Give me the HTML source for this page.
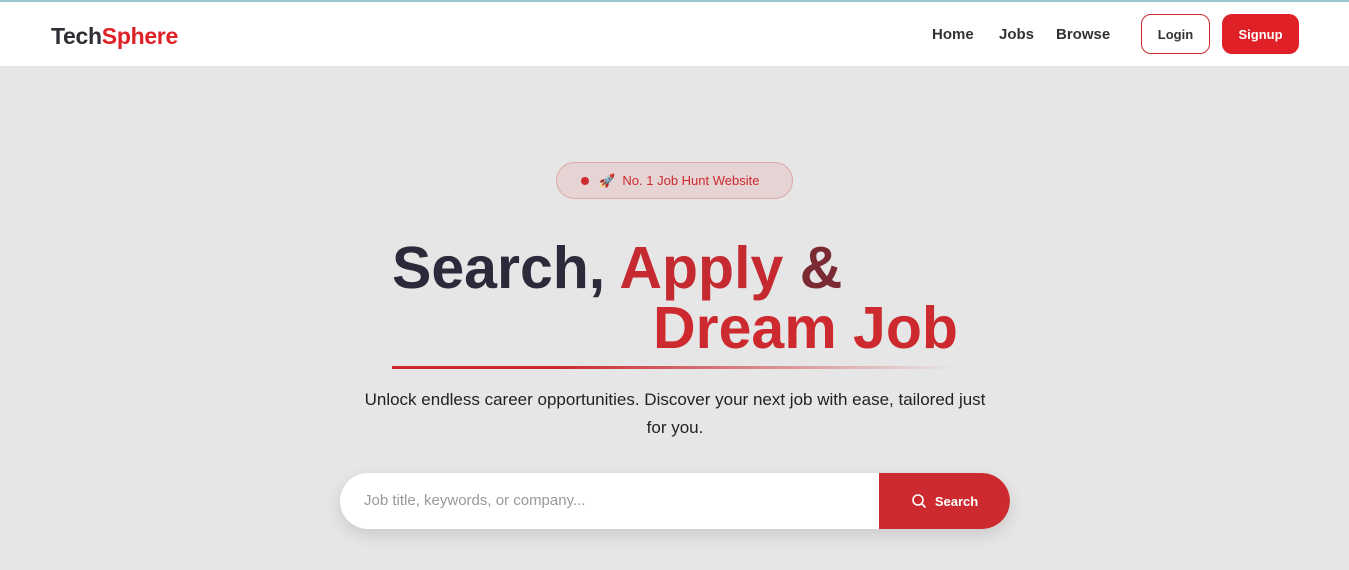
<!DOCTYPE html>
<html><head><style>
*{margin:0;padding:0;box-sizing:border-box}
body{width:1349px;height:570px;overflow:hidden;background:#e6e6e6;font-family:"Liberation Sans",sans-serif;position:relative}
.top{position:absolute;left:0;top:0;width:100%;height:2px;background:#9cc7cf}
nav{position:absolute;top:2px;left:0;width:100%;height:64px;background:#fff}
.logo{position:absolute;left:51px;top:21px;font-size:23px;font-weight:bold;color:#2e2e35;letter-spacing:-0.3px}
.logo span{color:#df2027}
.links{position:absolute;top:24px;font-size:15px;color:#333;font-weight:bold}
.btn{position:absolute;top:12px;height:40px;border-radius:10px;font-size:13px;font-weight:bold;display:flex;align-items:center;justify-content:center}
.badge{position:absolute;left:556px;top:162px;width:237px;height:37px;border-radius:19px;background:#e6d3d4;border:1px solid #e0a9aa;color:#cc2a2e;font-size:13px;display:flex;align-items:center;padding-left:24px}
.badge i{width:8px;height:8px;border-radius:50%;background:#cc2a2e;margin-right:10px}
h1{position:absolute;font-size:59px;font-weight:bold;letter-spacing:0px;white-space:nowrap}
.ul{position:absolute;left:392px;top:366px;width:565px;height:3px;background:linear-gradient(90deg,#cc2a2e,#cc2a2e 30%,rgba(204,42,46,0))}
p{position:absolute;left:350px;top:386px;width:650px;text-align:center;font-size:17px;line-height:28px;color:#222}
.search{position:absolute;left:340px;top:473px;width:670px;height:56px;border-radius:28px;background:#fff;box-shadow:0 6px 16px rgba(0,0,0,.12);overflow:hidden}
.search .ph{position:absolute;left:24px;top:19px;font-size:15px;color:#999}
.search .sb{position:absolute;right:0;top:0;width:131px;height:56px;background:#cc2a2e;color:#fff;font-size:13px;font-weight:bold;display:flex;align-items:center;justify-content:center;border-radius:0 28px 28px 0}
</style></head><body>
<div class="top"></div>
<nav>
<div class="logo">Tech<span>Sphere</span></div>
<div class="links" style="left:932px">Home</div>
<div class="links" style="left:999px">Jobs</div>
<div class="links" style="left:1056px">Browse</div>
<div class="btn" style="left:1141px;width:69px;border:1px solid #cc2a2e;color:#333">Login</div>
<div class="btn" style="left:1222px;width:77px;background:#df2027;color:#fff">Signup</div>
</nav>
<div class="badge"><i></i>🚀&nbsp; No. 1 Job Hunt Website</div>
<h1 style="left:392px;top:234px"><span style="color:#2c2a3a">Search,</span> <span style="color:#c42a30">Apply</span> <span style="color:#7a2a33">&amp;</span></h1>
<h1 style="left:653px;top:294px;color:#cc2a2e">Dream Job</h1>
<div class="ul"></div>
<p>Unlock endless career opportunities. Discover your next job with ease, tailored just<br>for you.</p>
<div class="search"><div class="ph">Job title, keywords, or company...</div>
<div class="sb"><svg width="16" height="16" viewBox="0 0 16 16" style="margin-right:8px"><circle cx="7" cy="7" r="5" fill="none" stroke="#fff" stroke-width="1.6"/><path d="M10.5 10.5L14 14" stroke="#fff" stroke-width="1.6" stroke-linecap="round"/></svg>Search</div></div>
</body></html>
